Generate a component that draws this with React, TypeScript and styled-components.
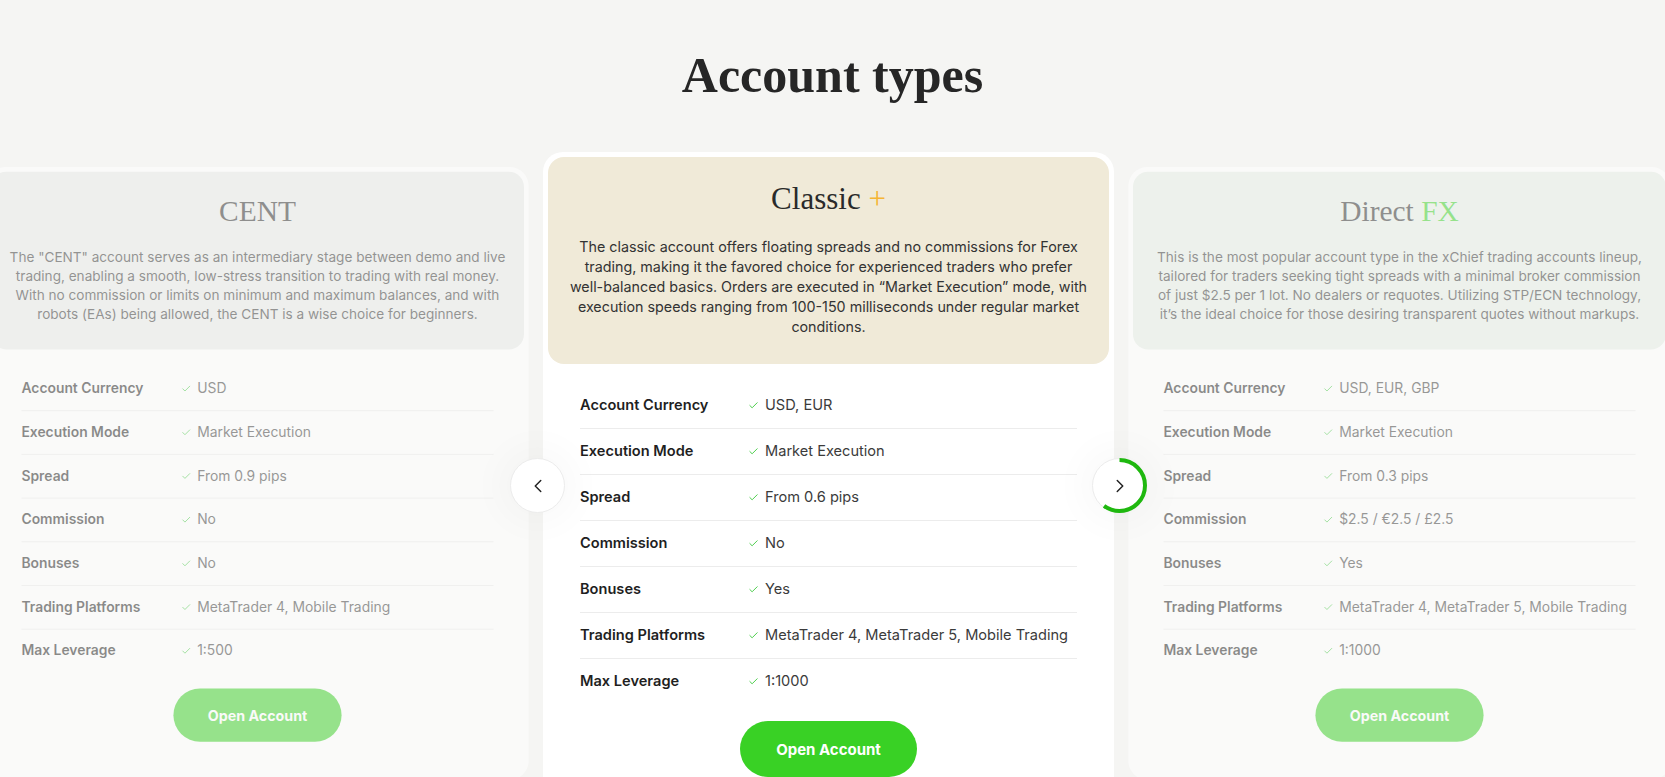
import React from 'react'
import styled, { createGlobalStyle } from 'styled-components'
import { Check, ChevronLeft, ChevronRight } from 'lucide-react'

const GlobalStyle = createGlobalStyle`
  html, body {
    margin: 0;
    padding: 0;
    overflow: hidden;
    background: #f5f5f3;
  }

  body {
    font-family: Inter, 'Noto Sans', sans-serif;
    color: #222;
  }

  * {
    box-sizing: border-box;
  }
`

const Section = styled.section`
  padding-top: 45px;
  min-height: 777px;
`

const Heading = styled.h1`
  margin: 0 0 47px;
  text-align: center;

  font-family: 'Liberation Serif', 'Times New Roman', serif;
  font-size: 50px;
  font-weight: 700;
  line-height: 1.2;
  color: #262626;
`

const Track = styled.div`
  display: flex;
  justify-content: center;
  align-items: flex-start;
  padding-right: 8px;
  overflow: hidden;
`

const Slide = styled.div<{ $active?: boolean }>`
  position: relative;
  z-index: ${props => (props.$active ? 2 : 1)};
  flex: 0 0 571px;
  margin-top: ${props => (props.$active ? 0 : '15px')};

  transform: ${props => (props.$active ? 'none' : 'scale(0.95)')};
  transform-origin: top center;
  opacity: ${props => (props.$active ? 1 : 0.5)};
`

const Card = styled.article`
  padding: 5px 5px 40px;
  border-radius: 20px;
  background: #fff;
`

const Header = styled.header<{ $tone: string }>`
  padding: 23px 18.5px 27px;
  border-radius: 16px;
  background: ${props => props.$tone};
  text-align: center;
`

const Title = styled.h2`
  margin: 0 0 20px;

  font-family: 'Liberation Serif', 'Times New Roman', serif;
  font-size: 31px;
  font-weight: 400;
  line-height: 1.2;
  color: #2a2a2a;
`

const Accent = styled.span<{ $color: string }>`
  color: ${props => props.$color};
`

const Description = styled.p`
  margin: 0;

  font-size: 14.3px;
  line-height: 20px;
  color: #333;
`

const Specs = styled.dl`
  margin: 0;
  padding: 19px 32px 0;
`

const SpecRow = styled.div`
  display: grid;
  grid-template-columns: 168px 1fr;
  align-items: center;
  padding: 12px 0;

  font-size: 14.6px;
  line-height: 21px;

  & + & {
    border-top: 1px solid #ececec;
  }
`

const SpecLabel = styled.dt`
  margin: 0;
  font-weight: 600;
  color: #1f1f1f;
`

const SpecValue = styled.dd`
  display: flex;
  align-items: center;
  gap: 6px;
  margin: 0;
  color: #3b3b3b;

  & svg {
    flex-shrink: 0;
    color: #3cc83c;
  }
`

const OpenButton = styled.button`
  display: block;
  width: 177px;
  height: 56px;
  margin: 17px auto 0;
  border: none;
  border-radius: 28px;
  background: #39d125;

  font-family: Inter, 'Noto Sans', sans-serif;
  font-size: 15px;
  font-weight: 700;
  color: #fff;
  cursor: pointer;
`

const NavButton = styled.button<{ $side: 'left' | 'right' }>`
  position: absolute;
  top: 306px;
  ${props => (props.$side === 'left' ? 'left: -33px;' : 'right: -33px;')}

  display: flex;
  align-items: center;
  justify-content: center;
  width: 55px;
  height: 55px;
  padding: 0;
  border: 1px solid #ececec;
  border-radius: 50%;
  background: #fff;
  box-shadow: 0 0 34px 14px rgba(0, 0, 0, 0.025);
  color: #222;
  cursor: pointer;

  & > .ring {
    position: absolute;
    inset: -1px;
    transform: rotate(-90deg);
  }
`

type Spec = { label: string; value: string }

type Account = {
  name: string
  accent?: { text: string; color: string }
  tone: string
  description: string
  specs: Spec[]
}

const labels = [
  'Account Currency',
  'Execution Mode',
  'Spread',
  'Commission',
  'Bonuses',
  'Trading Platforms',
  'Max Leverage'
]

const toSpecs = (values: string[]): Spec[] =>
  values.map((value, i) => ({ label: labels[i], value }))

const accounts: Account[] = [
  {
    name: 'CENT',
    tone: '#e9ebe9',
    description:
      'The "CENT" account serves as an intermediary stage between demo and live trading, enabling a smooth, low-stress transition to trading with real money. With no commission or limits on minimum and maximum balances, and with robots (EAs) being allowed, the CENT is a wise choice for beginners.',
    specs: toSpecs([
      'USD',
      'Market Execution',
      'From 0.9 pips',
      'No',
      'No',
      'MetaTrader 4, Mobile Trading',
      '1:500'
    ])
  },
  {
    name: 'Classic',
    accent: { text: '+', color: '#f5b534' },
    tone: '#f0ead8',
    description:
      'The classic account offers floating spreads and no commissions for Forex trading, making it the favored choice for experienced traders who prefer well-balanced basics. Orders are executed in \u201cMarket Execution\u201d mode, with execution speeds ranging from 100-150 milliseconds under regular market conditions.',
    specs: toSpecs([
      'USD, EUR',
      'Market Execution',
      'From 0.6 pips',
      'No',
      'Yes',
      'MetaTrader 4, MetaTrader 5, Mobile Trading',
      '1:1000'
    ])
  },
  {
    name: 'Direct',
    accent: { text: 'FX', color: '#39d125' },
    tone: '#e6eee6',
    description:
      'This is the most popular account type in the xChief trading accounts lineup, tailored for traders seeking tight spreads with a minimal broker commission of just $2.5 per 1 lot. No dealers or requotes. Utilizing STP/ECN technology, it\u2019s the ideal choice for those desiring transparent quotes without markups.',
    specs: toSpecs([
      'USD, EUR, GBP',
      'Market Execution',
      'From 0.3 pips',
      '$2.5 / \u20ac2.5 / \u00a32.5',
      'Yes',
      'MetaTrader 4, MetaTrader 5, Mobile Trading',
      '1:1000'
    ])
  }
]

const ProgressRing = ({ progress }: { progress: number }) => {
  const r = 25.5
  const length = 2 * Math.PI * r
  return (
    <svg className="ring" width="55" height="55" viewBox="0 0 55 55">
      <circle
        cx="27.5"
        cy="27.5"
        r={r}
        fill="none"
        stroke="#1fb80f"
        strokeWidth="4"
        strokeDasharray={`${length * progress} ${length}`}
      />
    </svg>
  )
}

const AccountCard = ({ account }: { account: Account }) => {
  return (
    <Card>
      <Header $tone={account.tone}>
        <Title>
          {account.name}
          {account.accent && (
            <>
              {' '}
              <Accent $color={account.accent.color}>{account.accent.text}</Accent>
            </>
          )}
        </Title>
        <Description>{account.description}</Description>
      </Header>
      <Specs>
        {account.specs.map(spec => (
          <SpecRow key={spec.label}>
            <SpecLabel>{spec.label}</SpecLabel>
            <SpecValue>
              <Check size={11} strokeWidth={2} />
              {spec.value}
            </SpecValue>
          </SpecRow>
        ))}
      </Specs>
      <OpenButton>Open Account</OpenButton>
    </Card>
  )
}

export default function App() {
  const activeIndex = 1
  return (
    <>
      <GlobalStyle />
      <Section>
        <Heading>Account types</Heading>
        <Track>
          {accounts.map((account, index) => (
            <Slide key={account.name} $active={index === activeIndex}>
              <AccountCard account={account} />
              {index === activeIndex && (
                <>
                  <NavButton $side="left" aria-label="Previous">
                    <ChevronLeft size={22} strokeWidth={1.6} />
                  </NavButton>
                  <NavButton $side="right" aria-label="Next">
                    <ProgressRing progress={0.6} />
                    <ChevronRight size={22} strokeWidth={1.6} />
                  </NavButton>
                </>
              )}
            </Slide>
          ))}
        </Track>
      </Section>
    </>
  )
}
